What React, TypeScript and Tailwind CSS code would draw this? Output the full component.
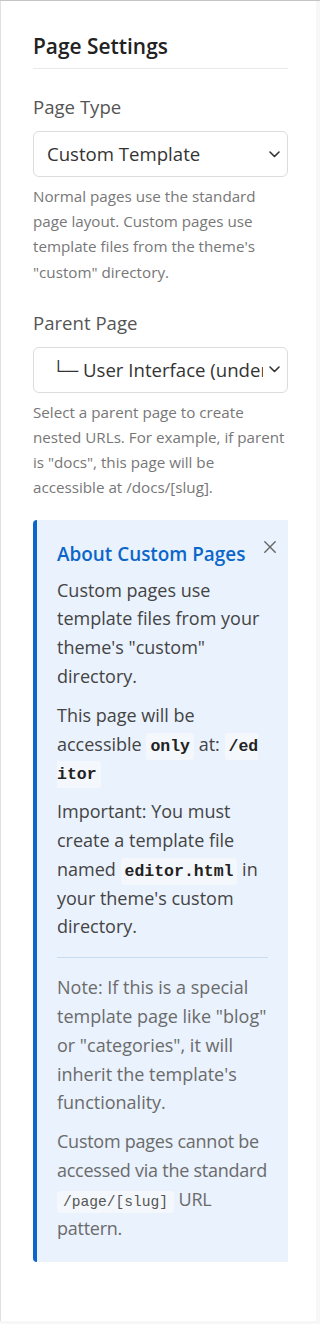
import React from "react";

function Chevron() {
  return (
    <svg width="11" height="7" viewBox="0 0 11 7" className="shrink-0 ml-[6px]">
      <path d="M1 1 L5.5 5.5 L10 1" fill="none" stroke="#333" strokeWidth="1.6" strokeLinecap="round" strokeLinejoin="round" />
    </svg>
  );
}

function FakeSelect({ children }: { children: React.ReactNode }) {
  return (
    <div className="mt-[8px] h-[46px] rounded-[6px] border border-[#dcdcdc] bg-white flex items-center pl-[13px] pr-[7px]">
      <span className="flex-1 min-w-0 overflow-hidden whitespace-nowrap text-[18.6px] leading-[24px] text-[#333]">{children}</span>
      <Chevron />
    </div>
  );
}

function Code({ children, light }: { children: React.ReactNode; light?: boolean }) {
  if (light) {
    return (
      <code className="font-['Liberation_Mono',monospace] tracking-normal text-[14.6px] leading-none text-[#555] bg-[#f4f7fb] rounded-[3px] px-[6px] py-[3px] break-all">
        {children}
      </code>
    );
  }
  return (
    <code className="font-['Liberation_Mono',monospace] font-bold text-[16.5px] leading-none text-[#222] bg-[#f4f7fb] rounded-[3px] px-[4px] py-[4px] break-all">
      {children}
    </code>
  );
}

export default function App() {
  return (
    <div className="w-[320px] h-[1324px] bg-[#f7f7f7] border-t border-[#c4c4c4] font-['Open_Sans',sans-serif]">
      <div className="w-[316px] h-[1320px] bg-white border-l border-[#e0e0e0] pl-[32px] pr-[28px] pt-[27px]">
        <h2 className="text-[20.9px] font-semibold text-[#222] leading-[36px] pb-[4px] border-b border-[#e9e9e9]">
          Page Settings
        </h2>

        <div className="mt-[22px]">
          <label className="block text-[18.6px] leading-[32px] text-[#555]">Page Type</label>
          <FakeSelect>Custom Template</FakeSelect>
          <p className="mt-[7px] text-[15.2px] leading-[25.2px] text-[#777]">
            Normal pages use the standard page layout. Custom pages use template files from the theme's "custom" directory.
          </p>
        </div>

        <div className="mt-[22px]">
          <label className="block text-[18.6px] leading-[32px] text-[#555]">Parent Page</label>
          <FakeSelect>{"\u00a0└─ User Interface (under Documentation)"}</FakeSelect>
          <p className="mt-[7px] text-[15.2px] leading-[25.2px] text-[#777]">
            Select a parent page to create nested URLs. For example, if parent is "docs", this page will be accessible at /docs/[slug].
          </p>
        </div>

        <div className="relative mt-[19px] bg-[#e9f2fd] border-l-4 border-[#0b66c9] rounded-l-[4px] pl-[20px] pr-[20px] pt-[21px] pb-[20px]">
          <svg width="12" height="12" viewBox="0 0 12 12" className="absolute top-[21px] right-[12px]">
            <path d="M0.8 0.8 L11.2 11.2 M11.2 0.8 L0.8 11.2" stroke="#666" strokeWidth="1.4" strokeLinecap="round" />
          </svg>
          <h3 className="text-[18.9px] leading-[26px] font-semibold text-[#0b66c9] mb-[9px]">About Custom Pages</h3>
          <p className="text-[18px] leading-[28.8px] text-[#444] mb-[10px]">
            Custom pages use template files from your theme's "custom" directory.
          </p>
          <p className="text-[18px] leading-[28.8px] text-[#444] mb-[10px]">
            This page will be accessible <Code>only</Code> at: <Code>/editor</Code>
          </p>
          <p className="text-[18px] leading-[28.8px] text-[#444]">
            Important: You must create a template file named <Code>editor.html</Code> in your theme's custom directory.
          </p>
          <div className="mt-[16px] border-t border-[#c9dcef] pt-[15px]">
            <p className="text-[18px] leading-[28.8px] text-[#6b6b6b] mb-[10px]">
              Note: If this is a special template page like "blog" or "categories", it will inherit the template's functionality.
            </p>
            <p className="text-[18px] leading-[28.8px] tracking-[-0.25px] text-[#6b6b6b]">
              Custom pages cannot be accessed via the standard <Code light>/page/[slug]</Code> URL pattern.
            </p>
          </div>
        </div>
      </div>
    </div>
  );
}
